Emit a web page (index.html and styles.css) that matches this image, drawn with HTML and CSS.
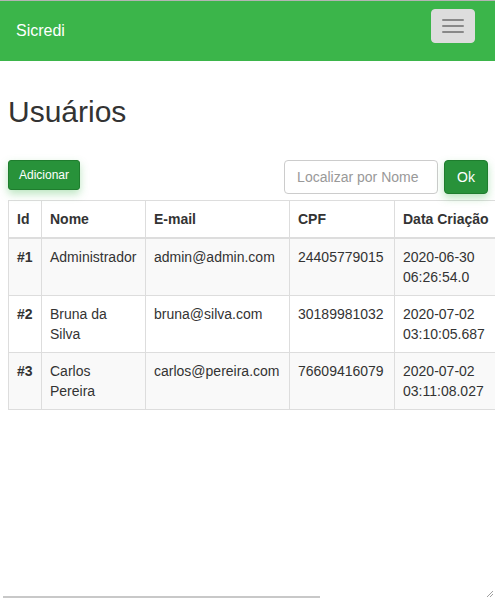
FILE: index.html
```html
<!DOCTYPE html>
<html lang="pt-BR">
<head>
<meta charset="utf-8">
<title>Sicredi - Usuários</title>
<link rel="stylesheet" href="styles.css">
</head>
<body>
<div class="topline"></div>
<nav class="navbar">
  <span class="brand">Sicredi</span>
  <button class="toggle" type="button" aria-label="Menu">
    <span class="bar"></span><span class="bar"></span><span class="bar"></span>
  </button>
</nav>
<main class="container">
  <h1 class="title">Usuários</h1>
  <div class="toolbar">
    <button class="btn btn-sm" type="button">Adicionar</button>
    <div class="search">
      <input class="search-input" type="text" placeholder="Localizar por Nome">
      <button class="btn" type="button">Ok</button>
    </div>
  </div>
  <table class="grid">
    <colgroup>
      <col class="c-id"><col class="c-nome"><col class="c-email"><col class="c-cpf"><col class="c-data">
    </colgroup>
    <thead>
      <tr><th>Id</th><th>Nome</th><th>E-mail</th><th>CPF</th><th>Data Criação</th></tr>
    </thead>
    <tbody>
      <tr><th>#1</th><td>Administrador</td><td>admin@admin.com</td><td>24405779015</td><td>2020-06-30 06:26:54.0</td></tr>
      <tr><th>#2</th><td>Bruna da Silva</td><td>bruna@silva.com</td><td>30189981032</td><td>2020-07-02 03:10:05.687</td></tr>
      <tr><th>#3</th><td>Carlos Pereira</td><td>carlos@pereira.com</td><td>76609416079</td><td>2020-07-02 03:11:08.027</td></tr>
    </tbody>
  </table>
</main>
<div class="hscroll"></div>
<svg class="grip" width="8" height="8" viewBox="0 0 8 8"><path d="M7 1 L1 7 M7 4 L4 7" stroke="#a0a0a0" stroke-width="1"/></svg>
</body>
</html>
```

FILE: styles.css
```css
html { overflow: hidden; }
body {
  margin: 0;
  font-family: "Liberation Sans", Arial, sans-serif;
  font-size: 14px;
  line-height: 20px;
  color: #333;
  background: #fff;
}
.topline { height: 1px; background: #b4b4b4; }
.navbar {
  height: 60px;
  background: #3bb54a;
  display: flex;
  justify-content: space-between;
  align-items: flex-start;
  padding: 0 20px 0 16px;
}
.brand {
  color: #fff;
  font-size: 16px;
  line-height: 20px;
  margin-top: 20px;
}
.toggle {
  margin-top: 8px;
  width: 44px;
  height: 34px;
  box-sizing: border-box;
  padding: 9px 10px;
  background: #dddddd;
  border: 1px solid #dddddd;
  border-radius: 4px;
  display: flex;
  flex-direction: column;
  gap: 4px;
  align-items: center;
}
.bar { display: block; width: 22px; height: 2px; background: #888; border-radius: 1px; }
.container { padding: 0 7px 0 8px; }
.title {
  margin: 34px 0 0;
  font-size: 30px;
  line-height: 33px;
  font-weight: normal;
}
.toolbar {
  margin-top: 32px;
  display: flex;
  justify-content: space-between;
  align-items: flex-start;
}
.btn {
  font-family: inherit;
  font-size: 14px;
  line-height: 20px;
  padding: 6px 12px;
  color: #fff;
  background: #28923a;
  border: 1px solid #1f7d2e;
  border-radius: 4px;
  box-shadow: 0 4px 8px rgba(59, 181, 74, 0.35);
}
.btn-sm { font-size: 12px; line-height: 18px; padding: 5px 10px; border-radius: 3px; }
.search { display: flex; gap: 6px; }
.search-input {
  width: 154px;
  height: 34px;
  box-sizing: border-box;
  padding: 6px 12px;
  font-family: inherit;
  font-size: 14px;
  color: #555;
  border: 1px solid #ccc;
  border-radius: 4px;
}
.search-input::placeholder { color: #999; }
.grid {
  margin-top: 6px;
  border-collapse: collapse;
  table-layout: fixed;
  width: 491px;
  border: 1px solid #ddd;
}
.c-id { width: 33px; }
.c-nome { width: 104px; }
.c-email { width: 144px; }
.c-cpf { width: 105px; }
.c-data { width: 105px; }
.grid th, .grid td {
  border: 1px solid #ddd;
  padding: 8px;
  text-align: left;
  vertical-align: top;
  line-height: 20px;
}
.grid thead th { border-bottom: 2px solid #ddd; }
.grid tbody tr:nth-child(odd) { background: #f9f9f9; }
.hscroll {
  position: fixed;
  left: 3px;
  bottom: 1px;
  width: 317px;
  height: 2px;
  background: #c8c8c8;
}
.grip { position: fixed; right: 1px; bottom: 1px; }
```
